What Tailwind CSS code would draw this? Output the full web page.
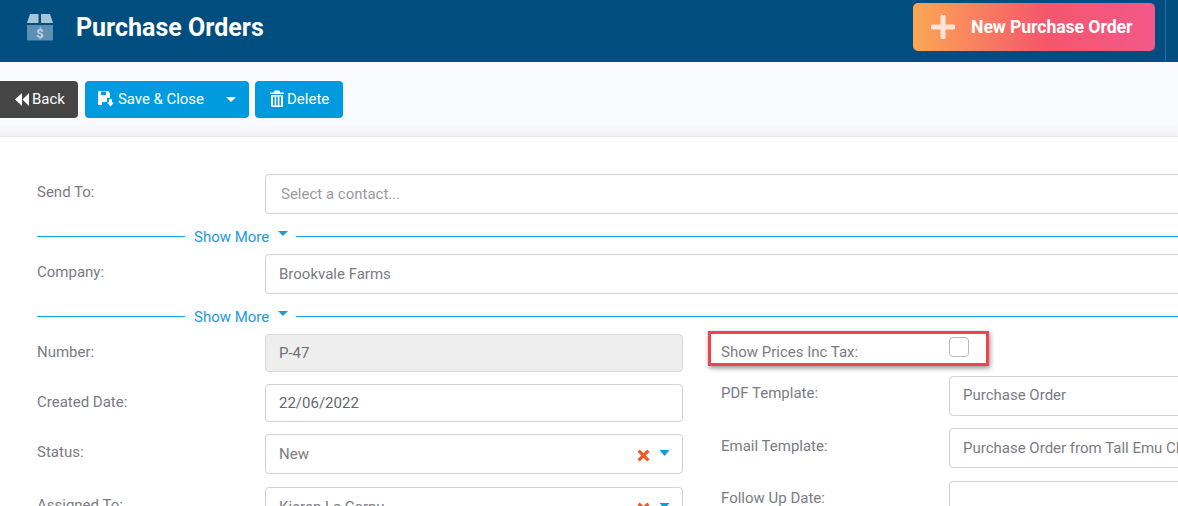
<!DOCTYPE html>
<html><head><meta charset="utf-8"><script src="https://cdn.jsdelivr.net/npm/@tailwindcss/browser@4"></script></head>
<body class="m-0 bg-white">
<div class="relative w-[1178px] h-[506px] overflow-hidden bg-white font-['Roboto',sans-serif] text-[15px] text-[#7b7b83]">
  <header class="h-[62px] bg-[#004d80] flex items-center relative">
    <svg class="ml-[26px] w-[28px] h-[28px] -mt-[8px]" viewBox="0 0 28 28"><path d="M1 10 L4 1 H12.5 V10 Z" fill="#a9c6d9"/><path d="M15 1 H24 L27 10 H15 Z" fill="#a9c6d9"/><path d="M1 12 H27 V26.5 a1 1 0 0 1-1 1 H2 a1 1 0 0 1-1-1 Z" fill="#5d8fb2"/><text x="14" y="25" text-anchor="middle" font-size="13" font-weight="700" fill="#bdd4e3" font-family="Roboto">$</text></svg>
    <h1 class="ml-[22px] text-[25px] font-bold text-white -mt-[8px] leading-none">Purchase Orders</h1>
    <button class="absolute left-[913px] top-[3px] w-[242px] h-[48px] rounded-[5px] bg-[linear-gradient(90deg,#fba754_0%,#f5566c_55%,#f3588a_100%)] flex items-center text-white font-bold text-[17.7px] tracking-[-0.1px]">
      <svg class="ml-[18px] w-[24px] h-[24px]" viewBox="0 0 24 24"><path d="M12 2 V22 M2 12 H22" stroke="#ffe3d6" stroke-width="5" stroke-linecap="round"/></svg>
      <span class="ml-[16px]">New Purchase Order</span>
    </button>
    <div class="absolute left-[1165px] top-0 h-[62px] w-px bg-[#2b6d99]"></div>
  </header>

  <div class="h-[75px] bg-[linear-gradient(180deg,#fafbff_85%,#f1f1f6_100%)] border-b border-[#e6e6ee] flex items-start pt-[19px] text-white text-[15px]">
    <button class="w-[78px] h-[37px] bg-[#454545] rounded-r-[4px] flex items-center pl-[15px] gap-[3px]">
      <svg class="w-[14px] h-[13px] -mt-[1px]" viewBox="0 0 14 13"><path d="M7 0 V13 L0 6.5 Z M14 0 V13 L7.5 6.5 Z" fill="#fff"/></svg>
      <span>Back</span>
    </button>
    <div class="ml-[7px] w-[164px] h-[37px] bg-[#009bdf] rounded-[4px] flex items-center pl-[13px] gap-[3px]">
      <svg class="w-[16px] h-[16px] -mt-[2px]" viewBox="0 0 16 16"><path d="M0 1 a1 1 0 0 1 1-1 H10 L12 2 V7 H9 V11 H5 a1 1 0 0 0-1 1 V14 H1 a1 1 0 0 1-1-1 Z" fill="#fff"/><path d="M3 0.5 H8 V4 H3 Z" fill="#009bdf"/><path d="M11 8 H14 V11.5 H16 L12.5 15.5 L9 11.5 H11 Z" fill="#fff"/></svg>
      <span class="ml-[1px] tracking-[-0.05px]">Save &amp; Close</span>
      <svg class="ml-[19px] w-[10px] h-[5px]" viewBox="0 0 10 5"><path d="M0 0 H10 L5 5 Z" fill="#fff"/></svg>
    </div>
    <button class="ml-[6px] w-[88px] h-[37px] bg-[#009bdf] rounded-[4px] flex items-center pl-[15px] gap-[3px]">
      <svg class="w-[14px] h-[17px] -mt-[2px]" viewBox="0 0 14 17"><path d="M0 2.5 H4 L4.5 .5 H9.5 L10 2.5 H14 V4 H0 Z" fill="#fff"/><path d="M1 5 H13 V16 a1 1 0 0 1-1 1 H2 a1 1 0 0 1-1-1 Z M3 6.5 V15.5 H4.6 V6.5 Z M6.2 6.5 V15.5 H7.8 V6.5 Z M9.4 6.5 V15.5 H11 V6.5 Z" fill="#fff" fill-rule="evenodd"/></svg>
      <span>Delete</span>
    </button>
  </div>

  <main class="pl-[37px] pt-[37px] w-[1240px]">
    <div class="flex h-[40px]">
      <label class="w-[228px] pt-[10px] leading-[17px]">Send To:</label>
      <div class="flex-1 h-[40px] border border-[#d2d2d6] rounded-[4px] pl-[15px] flex items-center text-[#9b9ba1] text-[15px]">Select a contact...</div>
    </div>
    <div class="flex items-center h-[40px] pt-[4px] w-[1203px]">
      <div class="w-[148px] h-px bg-[#0ea5dc]"></div>
      <span class="ml-[9px] mt-[2px] text-[#1c9bdc]">Show More</span>
      <svg class="ml-[9px] -mt-[5px] w-[10px] h-[5px]" viewBox="0 0 10 5"><path d="M0 0 H10 L5 5 Z" fill="#1c9bdc"/></svg>
      <div class="ml-[8px] flex-1 h-px bg-[#0ea5dc]"></div>
    </div>
    <div class="flex h-[40px]">
      <label class="w-[228px] pt-[10px] leading-[17px]">Company:</label>
      <div class="flex-1 h-[40px] border border-[#d2d2d6] rounded-[4px] pl-[13px] flex items-center text-[15px]">Brookvale Farms</div>
    </div>
    <div class="flex items-center h-[40px] pt-[4px] w-[1203px]">
      <div class="w-[148px] h-px bg-[#0ea5dc]"></div>
      <span class="ml-[9px] mt-[2px] text-[#1c9bdc]">Show More</span>
      <svg class="ml-[9px] -mt-[5px] w-[10px] h-[5px]" viewBox="0 0 10 5"><path d="M0 0 H10 L5 5 Z" fill="#1c9bdc"/></svg>
      <div class="ml-[8px] flex-1 h-px bg-[#0ea5dc]"></div>
    </div>

    <div class="flex">
      <div class="w-[646px] shrink-0">
        <div class="flex h-[38px]">
          <label class="w-[228px] pt-[10px] leading-[17px]">Number:</label>
          <div class="flex-1 border border-[#d8d8d8] bg-[#eeeeee] rounded-[4px] pl-[13px] flex items-center text-[15px] text-[#70707a]">P-47</div>
        </div>
        <div class="flex h-[38px] mt-[12px]">
          <label class="w-[228px] pt-[10px] leading-[17px]">Created Date:</label>
          <div class="flex-1 border border-[#d2d2d6] rounded-[4px] pl-[13px] flex items-center text-[15px] text-[#66666e]">22/06/2022</div>
        </div>
        <div class="flex h-[40px] mt-[12px]">
          <label class="w-[228px] pt-[10px] leading-[17px]">Status:</label>
          <div class="flex-1 border border-[#d2d2d6] rounded-[4px] pl-[13px] pr-[12px] flex items-center text-[15px]">
            <span class="flex-1">New</span>
            <svg class="w-[13px] h-[13px] mt-[2px]" viewBox="0 0 12 12"><path d="M1.5 1.5 L10.5 10.5 M10.5 1.5 L1.5 10.5" stroke="#ee5a2a" stroke-width="3"/></svg>
            <svg class="ml-[9px] w-[11px] h-[6px] -mt-[2px]" viewBox="0 0 10 6"><path d="M0 0 H10 L5 6 Z" fill="#0f9be0"/></svg>
          </div>
        </div>
        <div class="flex h-[40px] mt-[13px]">
          <label class="w-[228px] pt-[10px] leading-[17px]">Assigned To:</label>
          <div class="flex-1 border border-[#d2d2d6] rounded-[4px] pl-[13px] pr-[12px] flex items-center text-[15px]">
            <span class="flex-1">Kieren Le Cornu</span>
            <svg class="w-[13px] h-[13px] mt-[2px]" viewBox="0 0 12 12"><path d="M1.5 1.5 L10.5 10.5 M10.5 1.5 L1.5 10.5" stroke="#ee5a2a" stroke-width="3"/></svg>
            <svg class="ml-[9px] w-[11px] h-[6px] -mt-[2px]" viewBox="0 0 10 6"><path d="M0 0 H10 L5 6 Z" fill="#0f9be0"/></svg>
          </div>
        </div>
      </div>
      <div class="ml-[38px] flex-1">
        <div class="flex h-[30px]">
          <label class="w-[228px] pt-[10px] leading-[17px]">Show Prices Inc Tax:</label>
          <div class="mt-[3px] w-[20px] h-[20px] border border-[#b9b9bd] rounded-[4px]"></div>
        </div>
        <div class="flex h-[40px] mt-[12px]">
          <label class="w-[228px] pt-[9px] leading-[17px]">PDF Template:</label>
          <div class="flex-1 border border-[#d2d2d6] rounded-[4px] pl-[13px] pb-[2px] flex items-center text-[15px]">Purchase Order</div>
        </div>
        <div class="flex h-[40px] mt-[12px]">
          <label class="w-[228px] pt-[10px] leading-[17px]">Email Template:</label>
          <div class="flex-1 border border-[#d2d2d6] rounded-[4px] pl-[13px] flex items-center text-[15px] whitespace-nowrap overflow-hidden">Purchase Order from Tall Emu CRM</div>
        </div>
        <div class="flex h-[40px] mt-[13px]">
          <label class="w-[228px] pt-[9px] leading-[17px]">Follow Up Date:</label>
          <div class="flex-1 border border-[#d2d2d6] rounded-[4px]"></div>
        </div>
      </div>
    </div>
  </main>

  <div class="absolute left-[708px] top-[331px] w-[281px] h-[35px] border-[3px] border-[#f44249] shadow-[1px_2px_5px_rgba(0,0,0,0.45)] pointer-events-none"></div>
</div>
</body></html>
